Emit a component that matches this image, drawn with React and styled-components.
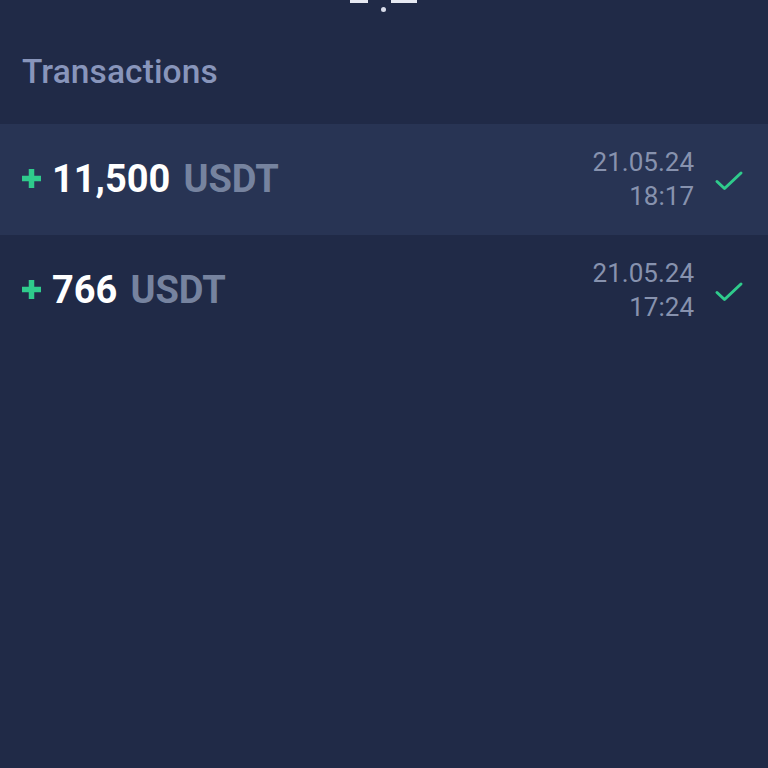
import React from "react";
import styled, { createGlobalStyle } from "styled-components";

const Global = createGlobalStyle`
  html, body { margin: 0; padding: 0; background: #202a47; }
  body { font-family: Roboto, "Noto Sans", sans-serif; }
`;

const Screen = styled.div`
  width: 768px;
  height: 768px;
  background: #202a47;
  display: flex;
  flex-direction: column;
  overflow: hidden;
`;

const TopStrip = styled.div`
  height: 40px;
  position: relative;
`;

const Block = styled.div`
  position: absolute;
  top: 0;
  left: ${(p) => p.$x}px;
  width: ${(p) => p.$w}px;
  height: 3px;
  background: #e6e9f2;
`;

const Dot = styled.div`
  position: absolute;
  top: 7px;
  left: 381px;
  width: 5px;
  height: 5px;
  border-radius: 50%;
  background: #d8dcea;
`;

const Title = styled.h1`
  margin: 0;
  padding: 12px 22px 0;
  height: 84px;
  box-sizing: border-box;
  font-size: 33.5px;
  font-weight: 500;
  color: #8895bb;
  letter-spacing: 0.1px;
`;

const List = styled.div`
  display: flex;
  flex-direction: column;
`;

const Row = styled.div`
  height: 111px;
  display: flex;
  align-items: center;
  padding: 0 24px 0 21px;
  background: ${(p) => (p.$active ? "#283454" : "transparent")};
`;

const Amount = styled.div`
  flex: 1;
  display: flex;
  align-items: center;
  font-weight: 700;
  font-size: 38px;
  margin-top: -2px;
`;

const Plus = styled.svg`
  width: 21px;
  height: 21px;
  margin-right: 10px;
  flex-shrink: 0;
`;

const Value = styled.span`
  color: #ffffff;
  margin-right: 13px;
`;

const Currency = styled.span`
  color: #76839f;
`;

const Stamp = styled.div`
  display: flex;
  flex-direction: column;
  align-items: flex-end;
  font-size: 26px;
  line-height: 34px;
  color: #8792ae;
  margin-right: 20px;
  margin-top: -2px;
`;

const Check = styled.svg`
  width: 30px;
  height: 30px;
  flex-shrink: 0;
`;

const rows = [
  { amount: "11,500", date: "21.05.24", time: "18:17", active: true },
  { amount: "766", date: "21.05.24", time: "17:24", active: false },
];

export default function App() {
  return (
    <>
      <Global />
      <Screen>
        <TopStrip>
          <Block $x={350} $w={18} />
          <Block $x={391} $w={26} />
          <Dot />
        </TopStrip>
        <Title>Transactions</Title>
        <List>
          {rows.map((r) => (
            <Row key={r.time} $active={r.active}>
              <Amount>
                <Plus viewBox="0 0 21 21">
                  <path d="M10.5 1 V20 M1 10.5 H20" stroke="#2fcb8c" strokeWidth="5.5" />
                </Plus>
                <Value>{r.amount}</Value>
                <Currency>USDT</Currency>
              </Amount>
              <Stamp>
                <span>{r.date}</span>
                <span>{r.time}</span>
              </Stamp>
              <Check viewBox="0 0 30 30" fill="none">
                <path
                  d="M3 16.5 L10.5 23.5 L27 8"
                  stroke="#2fcb8c"
                  strokeWidth="3"
                  strokeLinecap="round"
                  strokeLinejoin="round"
                />
              </Check>
            </Row>
          ))}
        </List>
      </Screen>
    </>
  );
}
